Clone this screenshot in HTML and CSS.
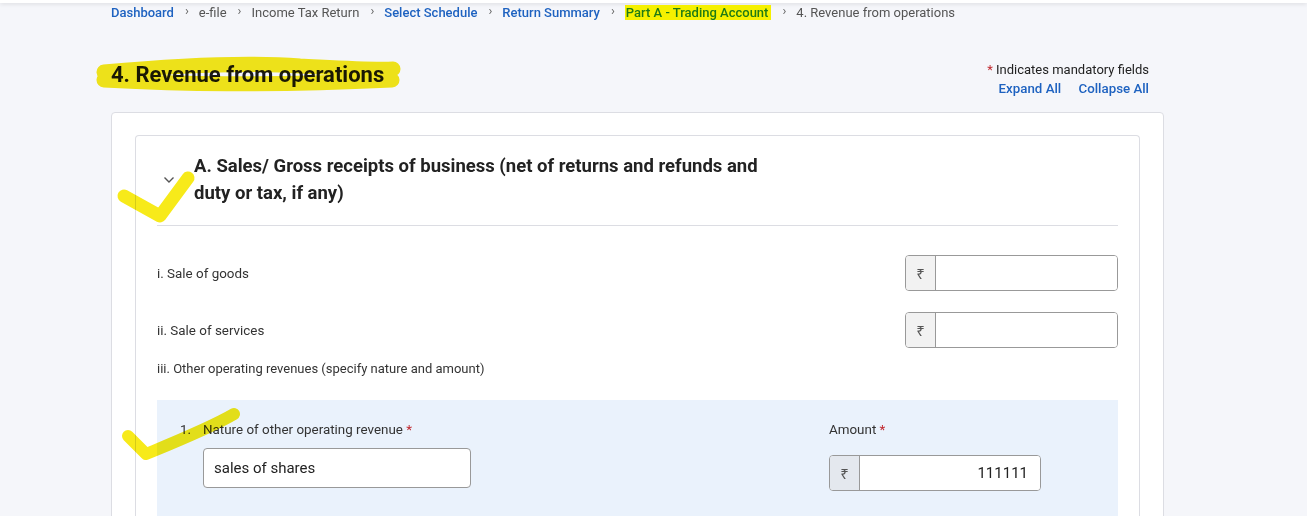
FILE: index.html
```html
<!DOCTYPE html>
<html lang="en">
<head>
    <meta charset="UTF-8">
    <meta name="viewport" content="width=device-width, initial-scale=1.0">
    <title>4. Revenue from operations</title>
    <link rel="stylesheet" href="styles.css">
</head>
<body>
    <div class="topbar"></div>

    <div class="page">
        <nav class="crumbs">
            <a href="#">Dashboard</a>
            <span class="sep">&#8250;</span>
            <span class="plain">e-file</span>
            <span class="sep">&#8250;</span>
            <span class="plain">Income Tax Return</span>
            <span class="sep">&#8250;</span>
            <a href="#">Select Schedule</a>
            <span class="sep">&#8250;</span>
            <a href="#">Return Summary</a>
            <span class="sep">&#8250;</span>
            <a href="#" class="marked">Part A - Trading Account</a>
            <span class="sep">&#8250;</span>
            <span class="plain">4. Revenue from operations</span>
        </nav>

        <div class="head">
            <h1>4. Revenue from operations</h1>
            <div class="head-right">
                <div class="mandatory"><span class="req">*</span> Indicates mandatory fields</div>
                <div class="toggles">
                    <a href="#">Expand All</a>
                    <a href="#">Collapse All</a>
                </div>
            </div>
        </div>

        <div class="card">
            <div class="section">
                <div class="section-head">
                    <span class="chevron">
                        <svg width="12" height="8" viewBox="0 0 12 8"><path d="M1.5 1.5 L6 6 L10.5 1.5" fill="none" stroke="#555" stroke-width="1.4"/></svg>
                    </span>
                    <h2>A. Sales/ Gross receipts of business (net of returns and refunds and duty or tax, if any)</h2>
                </div>

                <div class="row">
                    <label>i. Sale of goods</label>
                    <div class="money">
                        <span class="cur">&#8377;</span>
                        <input type="text">
                    </div>
                </div>

                <div class="row">
                    <label>ii. Sale of services</label>
                    <div class="money">
                        <span class="cur">&#8377;</span>
                        <input type="text">
                    </div>
                </div>

                <div class="row-text">iii. Other operating revenues (specify nature and amount)</div>

                <div class="other">
                    <div class="other-left">
                        <span class="num">1.</span>
                        <div class="field">
                            <label>Nature of other operating revenue <span class="req">*</span></label>
                            <input type="text" class="nature" value="sales of shares">
                        </div>
                    </div>
                    <div class="field amount">
                        <label>Amount <span class="req">*</span></label>
                        <div class="money tinted">
                            <span class="cur">&#8377;</span>
                            <input type="text" class="num-input" value="111111">
                        </div>
                    </div>
                </div>
            </div>
        </div>
    </div>

    <!-- hand drawn highlighter marks on the screenshot -->
    <svg class="marks" width="1307" height="516" viewBox="0 0 1307 516">
        <path d="M104 72 C170 66 250 62 300 66 C340 68 370 70 393 69 M104 80 C180 84 260 86 392 80" fill="none" stroke="#f7ea1a" stroke-width="15" stroke-linecap="round"/>
        <path d="M124 196 L160 216 L188 178" fill="none" stroke="#f7ea1a" stroke-width="13" stroke-linecap="round" stroke-linejoin="round"/>
        <path d="M128 436 L146 454 C180 440 210 428 234 414" fill="none" stroke="#f7ea1a" stroke-width="12" stroke-linecap="round" stroke-linejoin="round"/>
    </svg>
</body>
</html>
```

FILE: styles.css
```css
body {
    margin: 0;
    font-family: Roboto, "Noto Sans", Arial, sans-serif;
    background-color: #f5f6fa;
    color: #222;
}

a {
    color: #1e62c0;
    text-decoration: none;
}

.topbar {
    height: 3px;
    background-color: #fff;
    box-shadow: 0 1px 4px rgba(0, 0, 0, 0.12);
}

.page {
    width: 1053px;
    margin-left: 111px;
}

.crumbs {
    display: flex;
    align-items: center;
    font-size: 13px;
    height: 19px;
}

.crumbs a {
    font-weight: 500;
}

.crumbs .plain {
    color: #555;
}

.crumbs .sep {
    color: #666;
    font-size: 13px;
    margin: 0 10px 0 11px;
    position: relative;
    top: -2px;
}

.crumbs .marked {
    background-color: #f5f000;
    color: #1f7a14;
    padding: 0 3px 0 1px;
}

.head {
    display: flex;
    justify-content: space-between;
    padding: 39px 15px 0 0;
    height: 51px;
}

h1 {
    margin: 0;
    font-size: 22px;
    font-weight: 700;
    color: #1a1a1a;
    line-height: 28px;
}

.head-right {
    text-align: right;
    font-size: 13px;
    line-height: 19px;
    margin-top: -1px;
}

.req {
    color: #c0272d;
}

.toggles a {
    font-weight: 500;
    font-size: 13.3px;
    margin-left: 14px;
}

.card {
    background-color: #fff;
    border: 1px solid #dcdde3;
    border-radius: 4px;
    padding: 22px 23px 0 23px;
    height: 400px;
}

.section {
    border: 1px solid #dcdde3;
    border-bottom: none;
    border-radius: 4px 4px 0 0;
    padding: 0 21px;
    height: 400px;
}

.section-head {
    display: flex;
    align-items: center;
    padding: 17px 0 18px 0;
    border-bottom: 1px solid #dcdde3;
}

.chevron {
    width: 37px;
    padding-left: 6px;
    box-sizing: border-box;
    display: flex;
}

h2 {
    margin: 0;
    font-size: 18.5px;
    font-weight: 700;
    line-height: 27px;
    color: #222;
    max-width: 600px;
}

.row {
    display: flex;
    justify-content: space-between;
    align-items: center;
    margin-top: 29px;
}

.row + .row {
    margin-top: 21px;
}

.row label,
.row-text {
    font-size: 13px;
    color: #333;
}

.row label {
    font-size: 13.4px;
}

.row-text {
    margin-top: 13px;
    line-height: 16px;
}

.money {
    display: flex;
    width: 213px;
    height: 36px;
    border: 1px solid #999;
    border-radius: 4px;
    box-sizing: border-box;
    overflow: hidden;
    background-color: #fff;
}

.cur {
    width: 29px;
    flex: none;
    display: flex;
    align-items: center;
    justify-content: center;
    background-color: #f2f2f2;
    border-right: 1px solid #999;
    font-family: "Noto Sans", "DejaVu Sans", sans-serif;
    font-size: 15px;
    color: #555;
}

.money input {
    border: none;
    outline: none;
    flex: 1;
    min-width: 0;
    font-family: Roboto, Arial, sans-serif;
    font-size: 15px;
    padding: 0 12px;
}

.other {
    margin-top: 23px;
    background-color: #eaf2fc;
    display: flex;
    padding: 22px 0 0 23px;
    height: 120px;
    box-sizing: border-box;
}

.other-left {
    display: flex;
    width: 649px;
}

.num {
    font-size: 13.4px;
    color: #333;
    width: 23px;
    line-height: 16px;
}

.field label {
    display: block;
    font-size: 13.4px;
    color: #333;
    line-height: 16px;
}

.nature {
    display: block;
    margin-top: 10px;
    width: 268px;
    height: 40px;
    box-sizing: border-box;
    border: 1px solid #999;
    border-radius: 4px;
    padding: 0 10px;
    font-family: Roboto, Arial, sans-serif;
    font-size: 15px;
    color: #222;
}

.amount .money {
    margin-top: 17px;
    width: 212px;
}

.tinted .cur {
    background-color: #e4e8ee;
}

.num-input {
    text-align: right;
    color: #222;
}

.marks {
    position: absolute;
    left: 0;
    top: 0;
    pointer-events: none;
    mix-blend-mode: multiply;
}
```
